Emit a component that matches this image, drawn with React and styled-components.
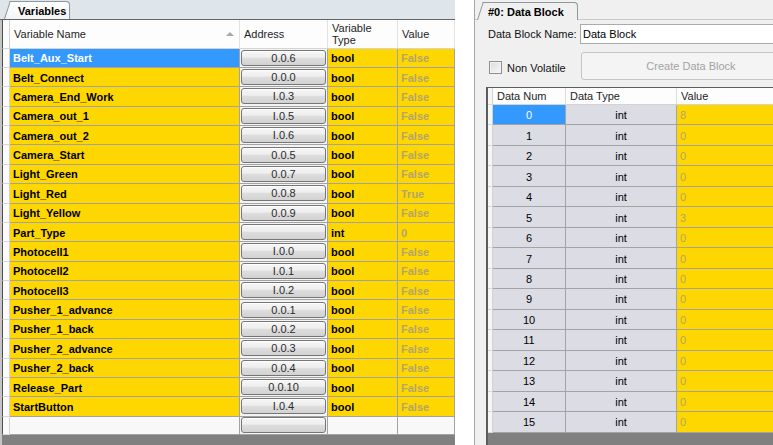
import styled, { createGlobalStyle } from 'styled-components'

const GlobalStyle = createGlobalStyle`
  html, body {
    margin: 0;
    padding: 0;
    background: #ffffff;
  }
  body {
    font-family: "Liberation Sans", Arial, sans-serif;
    font-size: 11px;
    color: #000;
  }
`

const variables = [
  ['Belt_Aux_Start', '0.0.6', 'bool', 'False'],
  ['Belt_Connect', '0.0.0', 'bool', 'False'],
  ['Camera_End_Work', 'I.0.3', 'bool', 'False'],
  ['Camera_out_1', 'I.0.5', 'bool', 'False'],
  ['Camera_out_2', 'I.0.6', 'bool', 'False'],
  ['Camera_Start', '0.0.5', 'bool', 'False'],
  ['Light_Green', '0.0.7', 'bool', 'False'],
  ['Light_Red', '0.0.8', 'bool', 'True'],
  ['Light_Yellow', '0.0.9', 'bool', 'False'],
  ['Part_Type', '', 'int', '0'],
  ['Photocell1', 'I.0.0', 'bool', 'False'],
  ['Photocell2', 'I.0.1', 'bool', 'False'],
  ['Photocell3', 'I.0.2', 'bool', 'False'],
  ['Pusher_1_advance', '0.0.1', 'bool', 'False'],
  ['Pusher_1_back', '0.0.2', 'bool', 'False'],
  ['Pusher_2_advance', '0.0.3', 'bool', 'False'],
  ['Pusher_2_back', '0.0.4', 'bool', 'False'],
  ['Release_Part', '0.0.10', 'bool', 'False'],
  ['StartButton', 'I.0.4', 'bool', 'False'],
]

const blockValues = ['8', '0', '0', '0', '0', '3', '0', '0', '0', '0', '0', '0', '0', '0', '0', '0']

const YELLOW = '#ffd700'
const SELECTED = '#3399ff'
const MUTED = '#b3a46e'
const LINE = '#a3a3a3'

const Page = styled.div`
  width: 773px;
  height: 445px;
  overflow: hidden;
  display: flex;
  background: #ffffff;
`

/* ---------- tabs ---------- */

const TabStrip = styled.div`
  height: 19px;
  flex: none;
  display: flex;
  align-items: flex-end;
  border-bottom: 1px solid ${({ $line }) => $line};
`

const Tab = styled.div`
  position: relative;
  box-sizing: border-box;
  width: ${({ $width }) => $width}px;
  height: 18px;
  margin-left: ${({ $left }) => $left}px;
  margin-bottom: ${({ $cover }) => ($cover ? '-1px' : '0')};
  padding-left: ${({ $pad }) => $pad}px;
  display: flex;
  align-items: center;
  font-weight: 700;
  color: #000;
  background: ${({ $bg }) => $bg};
  border-top: 1px solid #8d979d;
  border-right: 1px solid #8d979d;
  border-top-right-radius: 4px;

  &::before {
    content: '';
    position: absolute;
    left: -6px;
    top: -1px;
    bottom: 0;
    width: 9px;
    background: ${({ $bg }) => $bg};
    border-left: 1px solid #8d979d;
    border-top: 1px solid #8d979d;
    transform: skewX(-18deg);
    transform-origin: bottom left;
  }

  span {
    position: relative;
  }
`

/* ---------- variables panel ---------- */

const LeftPanel = styled.div`
  width: 455px;
  flex: none;
  display: flex;
  flex-direction: column;
  background: #dfe6eb;
`

const VarTable = styled.div`
  flex: 1;
  display: flex;
  flex-direction: column;
  border-left: 2px solid #c4c4c4;
  background: #ffffff;
`

const VarRow = styled.div`
  flex: none;
  height: ${({ $h }) => $h}px;
  display: grid;
  grid-template-columns: 8px 230px 88px 70px 57px;
`

const FillRow = styled(VarRow)`
  flex: 1;
  height: auto;
`

const RowHead = styled.div`
  box-sizing: border-box;
  background: #fbfbfb;
  border-left: 1px solid #4e4e4e;
  border-right: 1px solid #d2d2d2;
  border-bottom: 1px solid #d8d8d8;
`

const HeadCell = styled.div`
  box-sizing: border-box;
  display: flex;
  align-items: center;
  padding: 0 4px;
  line-height: 12px;
  color: #1e1e1e;
  background: #fdfdfd;
  border-right: 1px solid #e2e2e2;
  border-bottom: 1px solid #d4d4d4;
`

const SortArrow = styled.span`
  margin-left: auto;
  margin-right: 1px;
  width: 0;
  height: 0;
  border-left: 4px solid transparent;
  border-right: 4px solid transparent;
  border-bottom: 4px solid #a7a7a7;
`

const Cell = styled.div`
  box-sizing: border-box;
  display: flex;
  align-items: center;
  justify-content: ${({ $center }) => ($center ? 'center' : 'flex-start')};
  padding: 1px 3px 0;
  overflow: hidden;
  white-space: nowrap;
  background: ${({ $bg }) => $bg};
  color: ${({ $color }) => $color || '#000'};
  font-weight: ${({ $bold }) => ($bold ? 700 : 400)};
  border-right: 1px solid ${LINE};
  border-bottom: 1px solid ${LINE};
`

const AddrCell = styled.div`
  box-sizing: border-box;
  display: flex;
  align-items: center;
  padding: 0 1px;
  background: #f3f3f3;
  border-right: 1px solid ${LINE};
  border-bottom: 1px solid ${LINE};
`

const AddrButton = styled.div`
  box-sizing: border-box;
  flex: 1;
  height: 16px;
  display: flex;
  align-items: center;
  justify-content: center;
  color: #2b2b2b;
  border: 1px solid #767676;
  border-radius: 3px;
  background: linear-gradient(#f6f6f6 0%, #eeeeee 45%, #dedede 50%, #d2d2d2 100%);
  box-shadow: inset 0 1px 0 #ffffff;
`

const BottomBar = styled.div`
  flex: none;
  height: ${({ $h }) => $h}px;
  background: #808080;
`

/* ---------- data block panel ---------- */

const Gutter = styled.div`
  width: 19px;
  flex: none;
  background: #ffffff;
`

const RightPanel = styled.div`
  flex: 1;
  min-width: 0;
  display: flex;
  flex-direction: column;
  background: #f0f0f0;
  border-left: 1px solid #a6a6a6;
`

const Form = styled.div`
  flex: none;
  display: flex;
  flex-direction: column;
  gap: 8px;
  padding: 4px 0 0 13px;
`

const FieldRow = styled.div`
  display: flex;
  align-items: center;
  height: ${({ $h }) => $h}px;
`

const Label = styled.div`
  width: 92px;
  flex: none;
  color: #111;
`

const TextInput = styled.input`
  box-sizing: border-box;
  width: 220px;
  height: 20px;
  flex: none;
  padding: 0 2px;
  border: 1px solid #a9abb0;
  background: #ffffff;
  font: inherit;
  color: #000;
  outline: none;
`

const CheckWrap = styled.label`
  width: 93px;
  flex: none;
  display: flex;
  align-items: center;
  gap: 5px;
  padding: 3px 0 0 1px;
  box-sizing: border-box;
  color: #111;
`

const CheckBox = styled.span`
  width: 13px;
  height: 13px;
  box-sizing: border-box;
  border: 1px solid #8f8f8f;
  background: linear-gradient(135deg, #dcdcdc, #f8f8f8);
  box-shadow: inset 0 0 0 1px #f4f4f4;
`

const CreateButton = styled.div`
  box-sizing: border-box;
  width: 220px;
  height: 28px;
  flex: none;
  display: flex;
  align-items: center;
  justify-content: center;
  color: #a3a3a3;
  background: #f4f4f4;
  border: 1px solid #c5c5c5;
  border-radius: 3px;
`

const BlockTable = styled.div`
  flex: 1;
  width: 330px;
  margin: 7px 0 0 11px;
  display: flex;
  flex-direction: column;
  border-left: 2px solid #5c5c5c;
  border-top: 1px solid #5c5c5c;
  background: #ffffff;
`

const BlockRow = styled.div`
  flex: none;
  height: ${({ $h }) => $h}px;
  display: grid;
  grid-template-columns: 5px 73px 111px 130px;
`

const BlockHead = styled(HeadCell)`
  padding: 0 4px;
  border-right: 1px solid #dcdcdc;
`

const BlockRowHead = styled(RowHead)`
  border-left: none;
  background: #f6f6f6;
`

const FillBar = styled.div`
  flex: 1;
  background: #808080;
`

function App() {
  return (
    <Page>
      <GlobalStyle />
      <LeftPanel>
        <TabStrip $line="#646464">
          <Tab $width={60} $left={10} $pad={8} $bg="linear-gradient(#ffffff, #f2f4f6)">
            <span>Variables</span>
          </Tab>
        </TabStrip>
        <VarTable>
          <VarRow $h={28.5}>
            <RowHead />
            <HeadCell>
              Variable Name
              <SortArrow />
            </HeadCell>
            <HeadCell>Address</HeadCell>
            <HeadCell>
              Variable
              <br />
              Type
            </HeadCell>
            <HeadCell>Value</HeadCell>
          </VarRow>
          {variables.map(([name, addr, type, value], i) => (
            <VarRow key={name} $h={19.39}>
              <RowHead />
              <Cell $bold $bg={i === 0 ? SELECTED : YELLOW} $color={i === 0 ? '#ffffff' : '#000'}>
                {name}
              </Cell>
              <AddrCell>
                <AddrButton>{addr}</AddrButton>
              </AddrCell>
              <Cell $bold $bg={YELLOW}>
                {type}
              </Cell>
              <Cell $bold $bg={YELLOW} $color={MUTED}>
                {value}
              </Cell>
            </VarRow>
          ))}
          <FillRow>
            <RowHead />
            <Cell $bg="#f8f8f8" />
            <AddrCell>
              <AddrButton />
            </AddrCell>
            <Cell $bg="#f8f8f8" />
            <Cell $bg="#f8f8f8" />
          </FillRow>
          <BottomBar $h={10} />
        </VarTable>
      </LeftPanel>

      <Gutter />

      <RightPanel>
        <TabStrip $line="#c9c9c9">
          <Tab $width={95} $left={8} $pad={5} $cover $bg="#f0f0f0">
            <span>#0: Data Block</span>
          </Tab>
        </TabStrip>
        <Form>
          <FieldRow $h={20}>
            <Label>Data Block Name:</Label>
            <TextInput readOnly value="Data Block" />
          </FieldRow>
          <FieldRow $h={28}>
            <CheckWrap>
              <CheckBox />
              Non Volatile
            </CheckWrap>
            <CreateButton>Create Data Block</CreateButton>
          </FieldRow>
        </Form>
        <BlockTable>
          <BlockRow $h={17}>
            <BlockRowHead />
            <BlockHead>Data Num</BlockHead>
            <BlockHead>Data Type</BlockHead>
            <BlockHead>Value</BlockHead>
          </BlockRow>
          {blockValues.map((v, i) => (
            <BlockRow key={i} $h={20.47}>
              <BlockRowHead />
              <Cell $center $bg={i === 0 ? SELECTED : '#dbdce4'} $color={i === 0 ? '#ffffff' : '#000'}>
                {i}
              </Cell>
              <Cell $center $bg="#dbdce4">
                int
              </Cell>
              <Cell $bg={YELLOW} $color={MUTED}>
                {v}
              </Cell>
            </BlockRow>
          ))}
          <FillBar />
        </BlockTable>
      </RightPanel>
    </Page>
  )
}

export default App
